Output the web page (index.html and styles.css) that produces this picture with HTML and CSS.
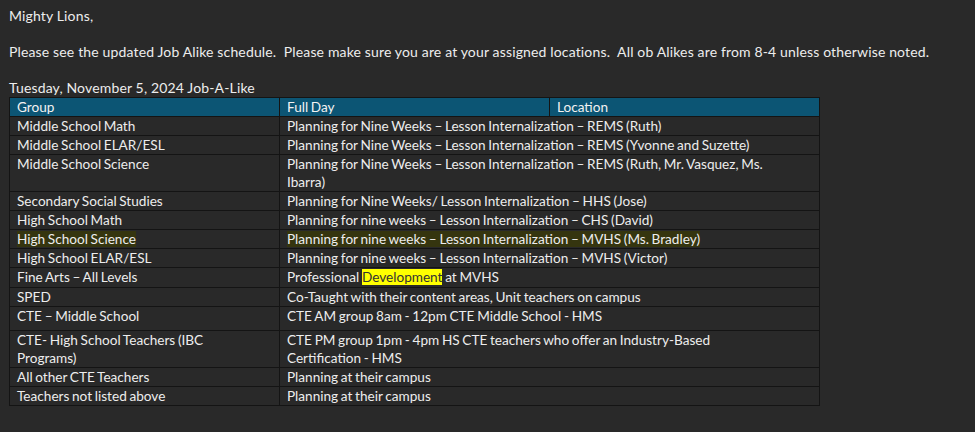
FILE: index.html
```html
<!DOCTYPE html>
<html>
<head>
<meta charset="utf-8">
<link rel="stylesheet" href="styles.css">
</head>
<body>
<div class="mail">
  <div class="line">Mighty Lions,</div>
  <div class="line blank"></div>
  <div class="line">Please see the updated Job Alike schedule.&nbsp; Please make sure you are at your assigned locations.&nbsp; All ob Alikes are from 8-4 unless otherwise noted.</div>
  <div class="line blank"></div>
  <div class="line">Tuesday, November 5, 2024 Job-A-Like</div>
  <table class="sched">
    <colgroup><col class="c1"><col class="c2"><col class="c3"></colgroup>
    <thead>
      <tr><th>Group</th><th>Full Day</th><th>Location</th></tr>
    </thead>
    <tbody>
      <tr><td>Middle School Math</td><td colspan="2">Planning for Nine Weeks – Lesson Internalization – REMS (Ruth)</td></tr>
      <tr><td>Middle School ELAR/ESL</td><td colspan="2">Planning for Nine Weeks – Lesson Internalization – REMS (Yvonne and Suzette)</td></tr>
      <tr><td>Middle School Science</td><td colspan="2"><div class="wrap">Planning for Nine Weeks – Lesson Internalization – REMS (Ruth, Mr. Vasquez, Ms. Ibarra)</div></td></tr>
      <tr><td>Secondary Social Studies</td><td colspan="2">Planning for Nine Weeks/ Lesson Internalization – HHS (Jose)</td></tr>
      <tr><td>High School Math</td><td colspan="2">Planning for nine weeks – Lesson Internalization – CHS (David)</td></tr>
      <tr><td><span class="hl">High School Science</span></td><td colspan="2"><span class="hl">Planning for nine weeks – Lesson Internalization – MVHS (Ms. Bradley)</span></td></tr>
      <tr><td>High School ELAR/ESL</td><td colspan="2">Planning for nine weeks – Lesson Internalization – MVHS (Victor)</td></tr>
      <tr class="mark"><td>Fine Arts – All Levels</td><td colspan="2">Professional <span class="yl">Development</span> at MVHS</td></tr>
      <tr><td>SPED</td><td colspan="2">Co-Taught with their content areas, Unit teachers on campus</td></tr>
      <tr class="tall"><td>CTE – Middle School</td><td colspan="2">CTE AM group 8am - 12pm CTE Middle School - HMS</td></tr>
      <tr><td><div class="wrap1">CTE- High School Teachers (IBC Programs)</div></td><td colspan="2"><div class="wrap2">CTE PM group 1pm - 4pm HS CTE teachers who offer an Industry-Based Certification - HMS</div></td></tr>
      <tr><td>All other CTE Teachers</td><td colspan="2">Planning at their campus</td></tr>
      <tr><td>Teachers not listed above</td><td colspan="2">Planning at their campus</td></tr>
    </tbody>
  </table>
</div>
</body>
</html>
```
FILE: styles.css
```css
html, body {
  margin: 0;
  background: #292929;
}
body {
  padding: 7px 9px;
  color: #ededed;
  font-family: "Lato", "Liberation Sans", sans-serif;
  font-size: 14px;
  line-height: 18px;
  letter-spacing: 0.15px;
}
.line {
  height: 18px;
  white-space: nowrap;
}
.sched {
  border-collapse: collapse;
  table-layout: fixed;
  width: 811px;
  font-size: 13.6px;
  line-height: 18px;
  letter-spacing: 0;
  word-spacing: -0.8px;
}
.c1, .c2, .c3 { width: 270px; }
.sched th, .sched td {
  border: 1px solid #141414;
  padding: 0 7px;
  text-align: left;
  vertical-align: top;
  font-weight: 400;
}
.sched th {
  background: #0c5574;
  color: #f2f2f2;
}
.wrap {
  max-width: 500px;
}
.wrap1 {
  max-width: 225px;
}
.wrap2 {
  max-width: 440px;
}
.mark td {
  height: 19px;
}
.tall td {
  height: 23px;
}
.hl {
  background: #35350f;
}
.yl {
  background: #ffff00;
  color: #333333;
}
```
